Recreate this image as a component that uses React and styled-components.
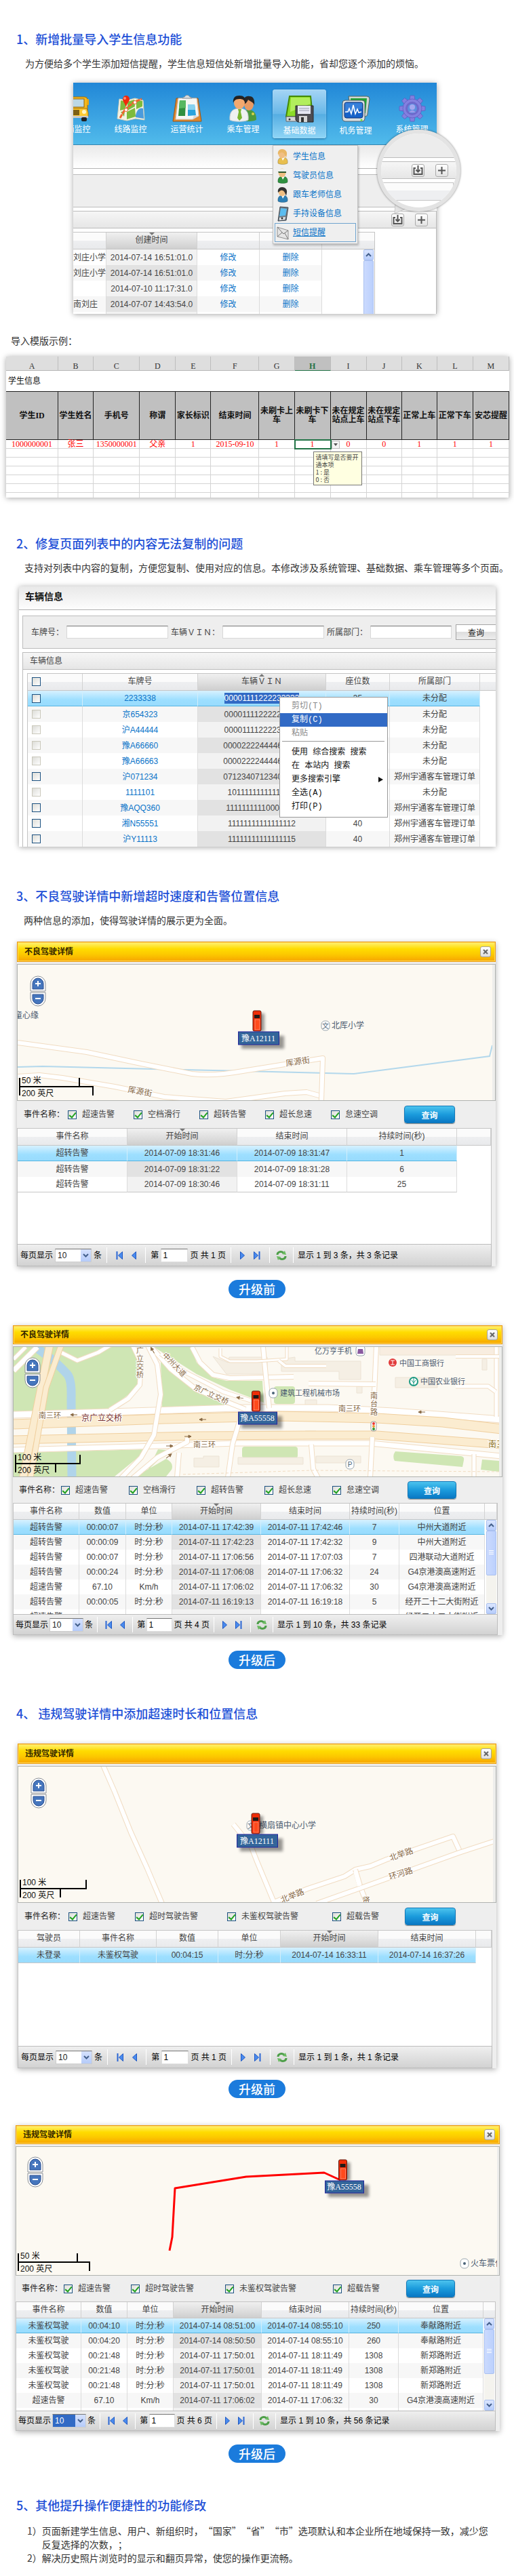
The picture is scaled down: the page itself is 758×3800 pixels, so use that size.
import React from "react";
import styled, { createGlobalStyle, css } from "styled-components";

const cjk = `"Noto Sans CJK SC", sans-serif`;
const ui = `"Liberation Sans", "Noto Sans CJK SC", sans-serif`;
const sheetFont = `"Liberation Serif", "Noto Sans CJK SC", serif`;

const Global = createGlobalStyle`
  * { box-sizing: border-box; }
  body { margin: 0; background: #fff; color: #333; font: 14px/20px ${cjk}; text-spacing-trim: space-all; }
  button, input, select { font-family: inherit; margin: 0; }
`;

/* ---------- page text ---------- */
const Page = styled.main`
  width: 100%;
  padding: 45px 0 16px;
  overflow: hidden;
`;
const Heading = styled.h2`
  margin: ${(p) => p.$top}px 24px 0;
  font-size: 18px;
  line-height: 24px;
  font-weight: 500;
  color: #1d4fd7;
`;
const Para = styled.p`
  margin: ${(p) => p.$top}px 0 0 ${(p) => p.$left}px;
`;
const Notes = styled.ol`
  margin: 16px 36px 0 40px;
  padding: 0;
  list-style: none;
`;
const Note = styled.li`
  display: flex;
`;
const NoteMark = styled.span`
  flex: 0 0 21px;
`;
const Pill = styled.div`
  width: 84px;
  height: 27px;
  margin: ${(p) => p.$top}px auto 0;
  border-radius: 14px;
  background: #1b7bdc;
  color: #fff;
  font-size: 18px;
  line-height: 26px;
  font-weight: 500;
  text-align: center;
`;

/* ---------- shared frames ---------- */
const Figure = styled.figure`
  position: relative;
  margin: ${(p) => p.$m};
  font: 12px/16px ${ui};
  color: #444;
`;
const Frame = styled.div`
  position: relative;
  overflow: hidden;
  height: ${(p) => p.$h}px;
  background: #fff;
  box-shadow: 0 1px 8px rgba(0, 0, 0, 0.35);
`;
const TitleStrip = styled.div`
  height: 35px;
  padding: 6px 9px;
  border-bottom: 1px solid #aeaeae;
  background: linear-gradient(#e8e8e8, #fdfdfd);
  font-size: 14px;
  line-height: 18px;
  font-weight: 700;
  color: #111;
`;
const GrayPanel = styled.div`
  height: 49px;
  margin: 8px 0 5px ${(p) => p.$left || 0}px;
  border: solid #bcbcbc;
  border-width: 1px 0 1px ${(p) => (p.$left ? 1 : 0)}px;
  background: #eee;
`;
const Toolbar = styled.div`
  display: flex;
  align-items: center;
  justify-content: ${(p) => (p.$end ? "flex-end" : "flex-start")};
  gap: 16px;
  height: 26px;
  padding: 0 12px 0 10px;
  border: solid #bcbcbc;
  border-width: 1px 0;
  background: linear-gradient(#f6f6f6, #e6e6e6);
`;
const ToolButton = styled.button`
  display: flex;
  align-items: center;
  justify-content: center;
  width: 19px;
  height: 19px;
  padding: 0;
  border: 1px solid #aaa;
  border-radius: 3px;
  background: linear-gradient(#fff, #e2e2e2);
`;

/* ---------- data table ---------- */
const GridBox = styled.div`
  position: relative;
  overflow: hidden;
  height: ${(p) => p.$h}px;
  margin-right: ${(p) => p.$right || 0}px;
  border: solid #c4c4c4;
  border-width: 1px ${(p) => (p.$open ? 0 : 1)}px 0 ${(p) => (p.$flush ? 0 : 1)}px;
  background: #fff;
`;
const Table = styled.table`
  width: 100%;
  table-layout: fixed;
  border-collapse: separate;
  border-spacing: 0;
  text-align: center;
  white-space: nowrap;
`;
const Col = styled.col`
  width: ${(p) => p.$w}px;
`;
const Th = styled.th`
  position: relative;
  height: ${(p) => p.$h || 25}px;
  padding: 0 0 2px;
  overflow: hidden;
  border-right: 1px solid #d2d2d2;
  border-bottom: 1px solid #c6c6c6;
  background: linear-gradient(#fbfbfb 50%, #eeeff1 51%, #e9eaec);
  font-weight: 400;
  line-height: 16px;
  ${(p) =>
    p.$sorted &&
    css`
      background: linear-gradient(#f0f0f0, #e0e0e0 50%, #cfcfcf);
      &::before {
        content: "";
        position: absolute;
        top: 0;
        left: calc(50% - 4px);
        border: 4px solid transparent;
        border-top-color: ${p.$up ? "transparent" : "#777"};
        border-bottom-color: ${p.$up ? "#777" : "transparent"};
        margin-top: ${p.$up ? -4 : 0}px;
      }
    `}
`;
const Td = styled.td`
  height: ${(p) => p.$h}px;
  padding: 0;
  overflow: hidden;
  line-height: 16px;
  border-right: 1px solid #dcdcdc;
  background: ${(p) => (p.$sorted ? (p.$even ? "#e2e2e2" : "#f2f2f2") : p.$even ? "#f7f7f7" : "#fff")};
  ${(p) =>
    p.$selected &&
    css`
      border-right-color: #d3eefb;
      border-bottom: 1px solid #55b5e2;
      background: linear-gradient(#d7f1ff, #9ddfff 60%, #98dbfd);
    `}
  ${(p) =>
    p.$last &&
    css`
      border-bottom: 1px solid #c6c6c6;
    `}
`;
const CellLink = styled.a`
  color: #0a74c9;
  text-decoration: none;
`;
const Selection = styled.span`
  display: inline-block;
  background: #316ac5;
  color: #fff;
`;
const Blank = styled.td`
  padding: 0;
`;

/* ---------- scroll bar ---------- */
const ScrollTrack = styled.div`
  position: absolute;
  top: ${(p) => p.$top}px;
  right: 1px;
  bottom: 0;
  display: flex;
  flex-direction: column;
  width: 15px;
  background: #f4f3ee;
`;
const ScrollKnob = styled.span`
  display: flex;
  align-items: center;
  justify-content: center;
  flex: 0 0 16px;
  border: 1px solid #a9c0f0;
  border-radius: 2px;
  background: linear-gradient(#dbe6ff, #b6ccfb);
`;
const ScrollThumb = styled(ScrollKnob)`
  flex: 0 0 ${(p) => p.$h}px;
  margin-bottom: auto;
  background: linear-gradient(90deg, #cbdafe, #bbd0fd);
`;
function Chevron({ up }) {
  return (
    <svg width="9" height="6" viewBox="0 0 9 6">
      <path d={up ? "M1 5l3.500-3.500L8 5" : "M1 1l3.500 3.500L8 1"} fill="none" stroke="#44608c" strokeWidth="2" />
    </svg>
  );
}
function ScrollBar({ top, thumb, ends }) {
  return (
    <ScrollTrack $top={top}>
      <ScrollKnob><Chevron up /></ScrollKnob>
      <ScrollThumb $h={thumb}>
        {ends && <svg width="7" height="8" viewBox="0 0 7 8"><path d="M0 .5h7M0 3h7M0 5.500h7" stroke="#fff" /></svg>}
      </ScrollThumb>
      {ends && <ScrollKnob><Chevron /></ScrollKnob>}
    </ScrollTrack>
  );
}

function DataGrid({ cols, heads, rows, sorted, selected, rowH = 23, headH = 25, up, closed }) {
  return (
    <Table>
      <colgroup>{cols.map((w, i) => <Col key={i} $w={w} />)}</colgroup>
      <thead>
        <tr>{heads.map((h, i) => <Th key={i} $h={headH} $sorted={i === sorted} $up={up}>{h}</Th>)}</tr>
      </thead>
      <tbody>
        {rows.map((r, n) => (
          <tr key={n}>
            {r.map((c, i) => (
              <Td key={i} $h={rowH} $even={n % 2 === 1} $sorted={i === sorted} $selected={selected && n === 0} $last={closed && n === rows.length - 1}>{c}</Td>
            ))}
            <Blank />
          </tr>
        ))}
      </tbody>
    </Table>
  );
}

/* ---------- section 1: navigation shot ---------- */
const NavBar = styled.nav`
  display: flex;
  height: 92px;
  padding-top: 10px;
  border-bottom: 1px solid #3585b0;
  background: linear-gradient(#2187d7, #51bbeb);
`;
const NavList = styled.div`
  display: flex;
  gap: 4px;
  margin-left: -38px;
`;
const NavItem = styled.button`
  display: flex;
  flex-direction: column;
  align-items: center;
  gap: 2px;
  width: 79px;
  height: 72px;
  padding: 8px 0 0;
  border: 0;
  border-radius: 4px;
  background: ${(p) => (p.$on ? "linear-gradient(#a5d5f5, #68b7e8 50%, #55ade2 51%, #8fd5f6)" : "none")};
  box-shadow: ${(p) => (p.$on ? "0 1px 3px rgba(0,60,110,.6), inset 0 0 1px #fff" : "none")};
  color: #fff;
  font-size: 12px;
  line-height: 18px;
  white-space: nowrap;
`;
const FadeStrip = styled.div`
  height: 35px;
  border-bottom: 1px solid #b4b4b4;
  background: linear-gradient(#e9e9e9, #fff);
`;
const ListArea = styled.div`
  border-right: 1px solid #bcbcbc;
`;
const RecordsPad = styled.div`
  padding: 5px 90px 0 0;
`;
const Clip = styled.div`
  overflow: hidden;
  text-align: left;
`;
const DropMenu = styled.ul`
  position: absolute;
  top: 92px;
  left: 294px;
  width: 126px;
  margin: 0;
  padding: 2px;
  list-style: none;
  border: 1px solid #c2c2c2;
  background: #efefef;
  box-shadow: 1px 2px 3px rgba(0, 0, 0, 0.25);
`;
const DropItem = styled.li`
  display: flex;
  align-items: center;
  gap: 6px;
  height: 28px;
  padding-left: 2px;
  border: 1px solid ${(p) => (p.$on ? "#6fa4cf" : "transparent")};
`;
const DropLink = styled.a`
  color: #0a74c9;
  text-decoration: ${(p) => (p.$on ? "underline" : "none")};
`;
const Lens = styled.div`
  position: absolute;
  top: 69px;
  right: -35px;
  width: 123px;
  height: 121px;
  border: 6px solid #e3e3e3;
  border-radius: 50%;
  overflow: hidden;
  background: #fff;
  box-shadow: 0 0 3px rgba(0, 0, 0, 0.5);
`;
const LensTop = styled.div`
  height: 36px;
  margin-bottom: 5px;
  border-bottom: 1px solid #bcbcbc;
  background: #ececec;
`;
const LensBar = styled(Toolbar)`
  padding: 0 0 0 45px;
`;
const LensBox = styled.div`
  height: 27px;
  margin: 5px 4px 0 0;
  border: 1px solid #c4c4c4;
  background: linear-gradient(#fbfbfb 45%, #eeeff1 46%);
`;
const LensTail = styled.svg`
  position: absolute;
  top: 177px;
  right: 42px;
`;

const ImportIcon = () => (
  <svg width="15" height="15" viewBox="0 0 15 15" fill="none" stroke="#555" strokeWidth="2">
    <path d="M4 4H1.500v9h12V4H11M7.500 0v9M4.500 6.500l3 3 3-3" />
  </svg>
);
const PlusIcon = () => (
  <svg width="11" height="11" viewBox="0 0 11 11"><path d="M5.500 0v11M0 5.500h11" stroke="#555" strokeWidth="2" /></svg>
);

const BusIcon = () => (
  <svg width="42" height="40" viewBox="0 0 42 40">
    <rect x="1" y="3" width="39" height="27" rx="4" fill="#f5b81c" stroke="#9b6c0c" />
    <rect x="5" y="6" width="30" height="12" fill="#bcd8e6" stroke="#8b6414" />
    <path d="M3 20h36l2 6v6H2z" fill="#ffcb33" stroke="#a87710" />
    <rect x="10" y="22" width="18" height="8" fill="#7d6014" /><circle cx="35" cy="25" r="3" fill="#fff7c8" />
    <rect x="1" y="31" width="40" height="3" fill="#c9c9c9" /><rect x="31" y="33" width="8" height="6" rx="2" fill="#222" />
    <rect x="39" y="6" width="3" height="9" rx="1" fill="#e8a813" />
  </svg>
);
const MapIcon = () => (
  <svg width="42" height="40" viewBox="0 0 42 40">
    <path d="M4 6l11 2 12-3 12 3 2 29-13-2-13 3-14-3z" fill="#f4f2e4" stroke="#d0d0b8" />
    <path d="M6 8l8 2-1 11-8 2zM16 10l10-3 1 10-11 6zM29 7l9 2v8l-9 4zM15 25l12-6 1 13-13 4zM6 25l6-1-1 8z" fill="#7dbb3c" />
    <path d="M28 30c2-8 6-12 11-10l1 15-12-2z" fill="#4b9bdc" />
    <path d="M5 34L12 22 25 11l12-5" fill="none" stroke="#f0642c" strokeWidth="3" strokeDasharray="6 1" />
    <circle cx="14" cy="22" r="2.500" fill="#fff" stroke="#e8602c" /><circle cx="27" cy="11" r="2.500" fill="#fff" stroke="#e8602c" />
    <path d="M14 18C12 12 9 10 9 6a5 5 0 0 1 10 0c0 4-4 6-5 12z" fill="#f0290c" /><circle cx="12" cy="5" r="2" fill="#ff8c72" />
  </svg>
);
const ClipboardIcon = () => (
  <svg width="44" height="40" viewBox="0 0 44 40">
    <path d="M6 5h32l5 34H1z" fill="#de8a33" stroke="#9c5514" />
    <path d="M9 5h27l3 26-9 5H5z" fill="#f7f7f4" stroke="#cfcfcf" /><path d="M39 31l-9 5 2-6z" fill="#d9d9d9" />
    <path d="M11 8h9l-1 23H9z" fill="#2f8f3f" /><path d="M11 8h9v11l-10 1z" fill="#58b862" />
    <path d="M23 14h10l2 16-12 1z" fill="#2aa3dd" /><path d="M23 14h10l1 8H23z" fill="#86d1ef" />
    <path d="M15 5c0-2 3-1 4-3 1-2 5-2 6 0 1 2 4 1 4 3z" fill="#d7dde2" stroke="#8a9299" />
  </svg>
);
const PeopleIcon = () => (
  <svg width="42" height="40" viewBox="0 0 42 40">
    <path d="M19 38c0-12 4-16 10-16s11 4 11 14c0 2-6 3-12 3z" fill="#4d9a3d" />
    <ellipse cx="29" cy="14" rx="7" ry="9" fill="#e89a63" /><path d="M20 14c0-9 4-13 10-12 6 0 8 6 7 13-2-5-6-5-9-8-2 4-4 7-8 7z" fill="#272727" />
    <path d="M1 37c-1-12 4-17 14-17s14 5 13 17c-6 3-21 3-27 0z" fill="#eef1f2" stroke="#c3c9cc" />
    <path d="M13 21h5l-1 4 2 9-4 4-3-4 2-9z" fill="#78b62f" />
    <ellipse cx="15" cy="12" rx="8" ry="9" fill="#f3a96f" /><path d="M6 12C5 4 9 1 15 1s10 3 9 11c-2-4-3-6-9-6s-8 3-9 6z" fill="#222" />
    <circle cx="35" cy="28" r="2" fill="#d9d24a" />
  </svg>
);
const DriveIcon = () => (
  <svg width="42" height="42" viewBox="0 0 42 42">
    <path d="M6 2h31l3 30H1z" fill="#8bdc27" stroke="#438708" strokeWidth="2" /><path d="M8 4h28l1 9L7 25z" fill="#b2ee5d" />
    <path d="M1 32h39v7H1z" fill="#d4d7d9" stroke="#666" /><circle cx="6" cy="36" r="1.500" fill="#333" />
    <path d="M15 16h26v24H18l-3-3z" fill="#4d4d52" stroke="#28282b" /><rect x="18" y="16" width="19" height="12" fill="#e5e7f2" />
    <path d="M20 20h15M20 23h15" stroke="#9a9db0" /><rect x="20" y="31" width="12" height="9" fill="#d5d5d5" /><rect x="23" y="33" width="4" height="7" fill="#333" />
  </svg>
);
const MonitorIcon = () => (
  <svg width="42" height="42" viewBox="0 0 42 42">
    <path d="M10 2h27q4 0 4 4l-3 22q0 4-5 4H14z" fill="#cfd6d3" stroke="#54655a" /><path d="M13 5h24l-2 22H14z" fill="#22a336" />
    <rect x="1" y="8" width="33" height="31" rx="4" fill="#d9dfe1" stroke="#53606a" /><rect x="4" y="11" width="27" height="23" rx="3" fill="#1762c8" stroke="#0c3278" />
    <path d="M5 12h25v8L5 27z" fill="#4b92e6" opacity=".6" />
    <path d="M5 25h4l2-5 3 8 3-13 3 13 3-7 2 5 4-1" fill="none" stroke="#fff" strokeWidth="1.500" /><circle cx="29" cy="37" r="1.500" fill="#6de332" />
  </svg>
);
const GearIcon = () => (
  <svg width="44" height="40" viewBox="-22 -20 44 40">
    <g fill="#8380e0" stroke="#5b58bd" strokeWidth=".7">
      {[0, 45, 90, 135, 180, 225, 270, 315].map((a) => <path key={a} d="M-4-11L-3-19H3L4-11z" transform={`rotate(${a})`} />)}
      <circle r="14" />
    </g>
    <circle r="8.500" fill="#5d8fe0" stroke="#6d69cc" strokeWidth="3" /><circle cy="-2" r="4" fill="#a5a8f0" />
    <path d="M-5 6q5-7 10 0z" fill="#9a9bea" />
  </svg>
);
const NAV = [
  ["车辆监控", BusIcon], ["线路监控", MapIcon], ["运营统计", ClipboardIcon], ["乘车管理", PeopleIcon],
  ["基础数据", DriveIcon], ["机务管理", MonitorIcon], ["系统管理", GearIcon],
];

const Person = ({ hair, body, skin = "#f0bf83", hat }) => (
  <svg width="18" height="23" viewBox="0 0 18 23">
    <path d="M2 21c-1-6 2-9 7-9s8 3 7 9c-4 2-10 2-14 0z" fill={body} stroke="#0003" />
    <path d="M7 12l2 5 3-5z" fill="#fff" /><ellipse cx="8" cy="7" rx="5.500" ry="6.500" fill={skin} />
    <path d={hat ? "M2 5q0-4 6-4t6 4l-1 2H3z" : "M2 8C1 3 4 0 8 0s8 3 7 8l-1 5C12 8 11 4 6 5z"} fill={hair} />
    {hat && <path d="M2 5h12v2H3z" fill="#2f5a2f" />}
  </svg>
);
const Pda = () => (
  <svg width="18" height="23" viewBox="0 0 18 23">
    <path d="M5 1l12 1-3 19-12 1z" fill="#737b84" stroke="#3f4850" /><path d="M6 3l9 1-2 10-9 1z" fill="#5bbdf0" />
    <path d="M4 17l9-1-1 4-8 1z" fill="#e1e4e6" /><circle cx="8" cy="18" r="1.500" fill="#333" />
  </svg>
);
const Mail = () => (
  <svg width="18" height="23" viewBox="0 0 18 23">
    <path d="M1 3l16 5v13L1 17z" fill="#e5e5e5" stroke="#8f8f8f" /><path d="M1 3l9 10 7-5M1 17l7-6M17 21l-5-9" fill="none" stroke="#777" />
  </svg>
);
const MENU = [
  ["学生信息", <Person hair="#e9b766" body="#e8bf4e" />], ["驾驶员信息", <Person hat hair="#eef1ee" body="#2f9140" />],
  ["跟车老师信息", <Person hair="#333" body="#2d7fb5" />], ["手持设备信息", <Pda />], ["短信提醒", <Mail />],
];

const link = (t) => <CellLink href="#">{t}</CellLink>;
const RECORDS = [
  ["刘庄小学", "2014-07-14 16:51:01.0"], ["刘庄小学", "2014-07-14 16:51:01.0"],
  ["", "2014-07-10 11:17:31.0"], ["南刘庄", "2014-07-07 14:43:54.0"],
];

function NavigationFigure() {
  return (
    <Figure $m="19px 114px 0 108px">
      <Frame $h={341}>
        <NavBar>
          <NavList>
            {NAV.map(([t, Icon], i) => <NavItem key={t} $on={i === 4}><Icon />{t}</NavItem>)}
          </NavList>
        </NavBar>
        <FadeStrip />
        <GrayPanel />
        <ListArea>
          <Toolbar $end>
            <ToolButton aria-label="导入"><ImportIcon /></ToolButton>
            <ToolButton aria-label="新增"><PlusIcon /></ToolButton>
          </Toolbar>
          <RecordsPad>
            <GridBox $h={121} $flush>
              <DataGrid
                cols={[49, 134, 92, 92, 79]}
                heads={["", "创建时间", "", "", ""]}
                sorted={1}
                rows={[...RECORDS.map(([a, b]) => [<Clip>{a}</Clip>, b, link("修改"), link("删除")]), ["", "", "", ""]]}
              />
              <ScrollBar top={25} thumb={90} />
            </GridBox>
          </RecordsPad>
        </ListArea>
        <DropMenu>
          {MENU.map(([t, icon], i) => <DropItem key={t} $on={i === 4}>{icon}<DropLink href="#" $on={i === 4}>{t}</DropLink></DropItem>)}
        </DropMenu>
      </Frame>
      <LensTail width="22" height="18" viewBox="0 0 22 18"><path d="M3 0L2 16 20 8z" fill="#e3e3e3" stroke="#c8c8c8" /></LensTail>
      <Lens>
        <LensTop />
        <LensBar>
          <ToolButton aria-label="导入"><ImportIcon /></ToolButton>
          <ToolButton aria-label="新增"><PlusIcon /></ToolButton>
        </LensBar>
        <LensBox />
      </Lens>
    </Figure>
  );
}

/* ---------- spreadsheet ---------- */
const Sheet = styled(Table)`
  font-family: ${sheetFont};
  font-size: 12px;
`;
const ColLetter = styled.th`
  height: 21px;
  padding: 7px 0 0;
  border-bottom: 1px solid ${(p) => (p.$on ? "#217346" : "#b5b5b5")};
  border-right: 1px solid #bdbdbd;
  background: ${(p) => (p.$on ? "#c0c0c0" : "#dedede")};
  color: ${(p) => (p.$on ? "#217346" : "#333")};
  font-weight: ${(p) => (p.$on ? 700 : 400)};
  line-height: 12px;
`;
const SheetTitle = styled.td`
  height: 31px;
  padding: 0 3px;
  border-bottom: 1px solid #222;
  text-align: left;
  color: #111;
`;
const FieldHead = styled.th`
  height: 71px;
  padding: 0;
  border: solid #222;
  border-width: 0 1px 1px 0;
  background: #c0c0c0;
  color: #111;
  font-weight: 700;
  line-height: 13px;
  white-space: pre-line;
`;
const SheetCell = styled.td`
  position: relative;
  height: 13px;
  padding: 0;
  border: solid #d4d4d4;
  border-width: 0 1px 1px 0;
  color: #f00;
  line-height: 12px;
  ${(p) =>
    p.$on &&
    css`
      z-index: 1;
      border-color: #217346;
      box-shadow: inset 1px 1px 0 #217346, 0 0 0 1px #217346;
    `}
`;
const CellDrop = styled.button`
  position: absolute;
  top: 1px;
  left: calc(100% + 2px);
  display: flex;
  align-items: center;
  justify-content: center;
  width: 12px;
  height: 12px;
  padding: 0;
  border: 1px solid #bbb;
  background: #f5f5f5;
`;
const CellTip = styled.div`
  position: absolute;
  z-index: 1;
  top: 17px;
  left: 27px;
  width: 72px;
  height: 50px;
  padding: 2px 3px;
  border: 1px solid #777;
  background: #ffffe1;
  color: #444;
  font: 9px/11px ${cjk};
  text-align: left;
  white-space: pre;
`;
const SHEET = [
  [77, "学生ID", "1000000001"], [52, "学生姓名", "张三"], [68, "手机号", "1350000001"], [53, "称谓", "父亲"],
  [52, "家长标识", "1"], [71, "结束时间", "2015-09-10"], [52, "未刷卡上\n车", "1"], [53, "未刷卡下\n车", "1"],
  [53, "未在规定\n站点上车", "0"], [52, "未在规定\n站点下车", "0"], [52, "正常上车", "1"], [53, "正常下车", "1"], [53, "安芯提醒", "1"],
];
function SheetFigure() {
  return (
    <Figure $m="14px 7px 0 9px">
      <Frame $h={208}>
        <Sheet>
          <colgroup>{SHEET.map(([w], i) => <Col key={i} $w={w} />)}</colgroup>
          <thead>
            <tr>{SHEET.map((_, i) => <ColLetter key={i} $on={i === 7}>{"ABCDEFGHIJKLM"[i]}</ColLetter>)}</tr>
          </thead>
          <tbody>
            <tr><SheetTitle colSpan={13}>学生信息</SheetTitle></tr>
            <tr>{SHEET.map(([, h], i) => <FieldHead key={i}>{h}</FieldHead>)}</tr>
            <tr>
              {SHEET.map(([, , v], i) => (
                <SheetCell key={i} $on={i === 7}>
                  {v}
                  {i === 7 && (
                    <>
                      <CellDrop aria-label="选择"><svg width="6" height="4" viewBox="0 0 6 4"><path d="M0 0h6L3 4z" fill="#555" /></svg></CellDrop>
                      <CellTip>{"请填写是否要开\n通本项\n1 : 是\n0 : 否"}</CellTip>
                    </>
                  )}
                </SheetCell>
              ))}
            </tr>
            {[0, 1, 2, 3, 4, 5].map((n) => <tr key={n}>{SHEET.map((_, i) => <SheetCell key={i} />)}</tr>)}
          </tbody>
        </Sheet>
      </Frame>
    </Figure>
  );
}

/* ---------- section 2: vehicle list ---------- */
const SearchRow = styled(GrayPanel)`
  display: flex;
  align-items: center;
  padding-left: 12px;
`;
const SearchLabel = styled.label`
  flex: 0 0 ${(p) => p.$w}px;
  white-space: nowrap;
`;
const SearchInput = styled.input`
  flex: 0 1 ${(p) => p.$w}px;
  min-width: 0;
  height: 19px;
  margin-right: ${(p) => p.$gap || 4}px;
  border: 1px solid #d8d8d8;
  border-top: 1px solid #777;
  background: #fff;
`;
const GrayButton = styled.button`
  flex: 1 0 56px;
  height: 23px;
  padding: 0;
  border: 1px solid #a5a5a5;
  border-right: 0;
  background: linear-gradient(#fff 45%, #dedede 50%, #ededed);
  color: #222;
  font-size: 12px;
`;
const ListBox = styled.div`
  margin-left: 5px;
  border-left: 1px solid #bcbcbc;
`;
const ListPad = styled.div`
  padding: 5px 0 0 6px;
`;
const Tick = styled.input.attrs({ type: "checkbox" })`
  appearance: none;
  position: relative;
  flex: none;
  display: block;
  width: 13px;
  height: 13px;
  border: 1px solid ${(p) => (p.disabled ? "#cac8bb" : "#1c5180")};
  background: linear-gradient(135deg, #dcdcd7, #fff);
  &:checked::after {
    content: "";
    position: absolute;
    left: 3px;
    top: 0;
    width: 4px;
    height: 8px;
    border: solid #21a121;
    border-width: 0 2px 2px 0;
    transform: rotate(40deg);
  }
`;
const TickCell = styled.div`
  padding-left: 6px;
`;
const ContextMenu = styled.ul`
  position: absolute;
  top: 163px;
  left: 384px;
  width: 160px;
  height: 178px;
  margin: 0;
  padding: 3px 0;
  list-style: none;
  border: 1px solid #999;
  background: #fff;
  font-family: "Liberation Mono", ${cjk};
`;
const ContextItem = styled.li`
  display: flex;
  align-items: center;
  justify-content: space-between;
  height: 20px;
  padding: 0 6px 0 17px;
  background: ${(p) => (p.$on ? "#316ac5" : "none")};
  color: ${(p) => (p.$on ? "#fff" : p.$off ? "#8a8a8a" : "#111")};
  white-space: pre;
`;
const ContextRule = styled.li`
  height: 1px;
  margin: 1px 4px 6px 3px;
  background: #999;
`;
const dept = "郑州宇通客车管理订单";
const CARS = [
  ["2233338", "00001111222233333", "35", "未分配", 1], ["京654323", "00001111222223333", "35", "未分配", 0],
  ["沪A44444", "00001111222233334", "35", "未分配", 0], ["豫A66660", "00002222444466660", "35", "未分配", 0],
  ["豫A66663", "00002222444466663", "35", "未分配", 0], ["沪071234", "07123407123407123", "35", dept, 1],
  ["1111101", "10111111111111111", "35", "未分配", 0], ["豫AQQ360", "11111111110003600", "40", dept, 1],
  ["湘N55551", "11111111111111112", "40", dept, 1], ["沪Y11113", "11111111111111115", "40", dept, 1],
];
function VehicleFigure() {
  return (
    <Figure $m="18px 27px 0 28px">
      <Frame $h={384}>
        <TitleStrip>车辆信息</TitleStrip>
        <SearchRow $left={5}>
          <SearchLabel $w={52} htmlFor="plate">车牌号：</SearchLabel><SearchInput $w={150} id="plate" />
          <SearchLabel $w={76} htmlFor="vin">车辆ＶＩＮ：</SearchLabel><SearchInput $w={150} id="vin" />
          <SearchLabel $w={64} htmlFor="dept">所属部门：</SearchLabel><SearchInput $w={120} $gap={6} id="dept" />
          <GrayButton>查询</GrayButton>
        </SearchRow>
        <ListBox>
          <Toolbar>车辆信息</Toolbar>
          <ListPad>
            <GridBox $h={256} $open>
              <DataGrid
                cols={[81, 170, 189, 94, 133, 24]}
                heads={[<TickCell><Tick aria-label="全选" /></TickCell>, "车牌号", "车辆ＶＩＮ", "座位数", "所属部门", ""]}
                sorted={2}
                up
                selected
                rows={CARS.map(([a, b, c, d, on], i) => [
                  <TickCell><Tick aria-label={a} disabled={!on} /></TickCell>, link(a), i ? b : <Selection>{b}</Selection>, c, d,
                ])}
              />
            </GridBox>
          </ListPad>
        </ListBox>
        <ContextMenu>
          <ContextItem $off>剪切(T)</ContextItem>
          <ContextItem $on>复制(C)</ContextItem>
          <ContextItem $off>粘贴</ContextItem>
          <ContextRule />
          <ContextItem>使用 综合搜索 搜索</ContextItem>
          <ContextItem>在 本站内 搜索</ContextItem>
          <ContextItem>更多搜索引擎<svg width="7" height="8" viewBox="0 0 7 8"><path d="M0 0l7 4-7 4z" fill="#111" /></svg></ContextItem>
          <ContextItem>全选(A)</ContextItem>
          <ContextItem>打印(P)</ContextItem>
        </ContextMenu>
      </Frame>
    </Figure>
  );
}

/* ---------- sections 3 and 4: detail windows ---------- */
const Window = styled(Figure)`
  background: #eee;
  box-shadow: 0 2px 8px rgba(0, 0, 0, 0.3);
`;
const WindowTitle = styled.div`
  display: flex;
  align-items: center;
  justify-content: space-between;
  height: ${(p) => p.$h}px;
  margin-bottom: 3px;
  padding: 0 6px 0 10px;
  border: 1px solid #eb9c10;
  background: linear-gradient(#fff176, #ffdc00 35%, #fcc800 65%, #f7a400);
  box-shadow: inset 0 0 0 1px #ffd95a;
  color: #332500;
  font-weight: 700;
`;
const CloseButton = styled.button`
  display: flex;
  align-items: center;
  justify-content: center;
  width: 16px;
  height: 16px;
  padding: 0;
  border: 1px solid #a8a49a;
  border-radius: 3px;
  background: linear-gradient(#fff, #ddd);
`;
const MapBox = styled.div`
  border: 1px solid #b0b3b0;
  background: #fcf9f2;
`;
const MapSvg = styled.svg`
  display: block;
  width: 100%;
  height: ${(p) => p.$h}px;
  font: 12px ${ui};
`;
const FilterBar = styled.div`
  display: flex;
  align-items: center;
  height: ${(p) => p.$h}px;
  padding-left: ${(p) => p.$left}px;
  white-space: nowrap;
`;
const FilterName = styled.span`
  flex: 0 0 ${(p) => p.$w}px;
  color: #222;
`;
const FilterItem = styled.label`
  display: flex;
  align-items: center;
  gap: 8px;
  flex: 0 0 ${(p) => p.$w}px;
`;
const BlueButton = styled.button`
  width: ${(p) => p.$w}px;
  height: 26px;
  margin-left: 11px;
  padding: 0;
  border: 1px solid #1278b8;
  border-radius: 4px;
  background: linear-gradient(#4cc3ee, #1b9bdc 50%, #0a78c4);
  box-shadow: 0 1px 1px #888;
  color: #fff;
  font-size: 12px;
  font-weight: 700;
`;
const PagerBar = styled.div`
  display: flex;
  align-items: center;
  height: ${(p) => p.$h}px;
  margin-right: ${(p) => p.$right}px;
  border: 1px solid #bdbdbd;
  background: linear-gradient(#efefef, #d2d2d2);
  color: #000;
  white-space: pre;
`;
const PagerGroup = styled.div`
  display: flex;
  align-items: center;
  gap: ${(p) => p.$gap || 3}px;
  height: 23px;
  padding: 0 ${(p) => p.$pad}px;
  border-right: ${(p) => (p.$end ? 0 : 1)}px solid #fff;
`;
const PageSize = styled.span`
  position: relative;
  display: block;
  width: ${(p) => p.$w}px;
  height: 20px;
`;
const SizeSelect = styled.select`
  appearance: none;
  width: 100%;
  height: 20px;
  padding: 0 3px;
  border: 1px solid #ccc;
  border-top-color: #777;
  border-radius: 0;
  background: ${(p) => (p.$on ? "#316ac5" : "#fff")};
  color: ${(p) => (p.$on ? "#fff" : "#222")};
  font-size: 12px;
`;
const SizeArrow = styled.span`
  position: absolute;
  top: 1px;
  right: 1px;
  display: flex;
  align-items: center;
  justify-content: center;
  width: 15px;
  height: 18px;
  background: linear-gradient(#d5e1fd, #b5cbf9);
  pointer-events: none;
`;
const PageInput = styled.input`
  width: ${(p) => p.$w}px;
  height: 20px;
  padding: 0 2px;
  border: 1px solid #ddd;
  border-top-color: #777;
  font-size: 12px;
`;
const IconButton = styled.button`
  display: block;
  padding: 0;
  border: 0;
  background: none;
  line-height: 0;
`;
const Arrow = ({ flip, bar, label }) => (
  <IconButton aria-label={label}>
    <svg width={bar ? 10 : 7} height="12" viewBox={bar ? "0 0 10 12" : "0 0 7 12"}>
      <g transform={flip ? `translate(${bar ? 10 : 7} 0) scale(-1 1)` : undefined}>
        <path d="M.5.500L6.500 6 .5 11.500z" fill="#4a8bee" stroke="#1e58c4" />
        {bar && <path d="M8.500 0v12" stroke="#2b66d4" strokeWidth="2" />}
      </g>
    </svg>
  </IconButton>
);
const Refresh = () => (
  <IconButton aria-label="刷新">
    <svg width="16" height="16" viewBox="0 0 16 16" fill="none" stroke="#4d9e48" strokeWidth="3">
      <path d="M2 7c0-4 5-6 9-3M14 9c0 4-5 6-9 3" /><path d="M9 6l6 1-2-6zM7 10l-6-1 2 6z" fill="#6abb60" stroke="none" />
    </svg>
  </IconButton>
);
function Pager({ h, right, pages, total, to, small, active }) {
  const s = small ? 1 : 0;
  return (
    <PagerBar $h={h} $right={right}>
      <PagerGroup $pad={small ? 3 : 4} $gap={small ? 2 : 3}>
        每页显示
        <PageSize $w={small ? 50 : 54}>
          <SizeSelect aria-label="每页显示" $on={active}><option>10</option></SizeSelect>
          <SizeArrow><Chevron /></SizeArrow>
        </PageSize>
        {"条 "}
      </PagerGroup>
      <PagerGroup $pad={13 - s * 2} $gap={13 - s}><Arrow flip bar label="首页" /><Arrow flip label="上一页" /></PagerGroup>
      <PagerGroup $pad={7 - s} $gap={3 - s}>第<PageInput $w={small ? 38 : 40} aria-label="页码" defaultValue="1" />{`页 共 ${pages} 页`}</PagerGroup>
      <PagerGroup $pad={13 - s} $gap={13 - s}><Arrow label="下一页" /><Arrow bar label="末页" /></PagerGroup>
      <PagerGroup $pad={9 - s}><Refresh /></PagerGroup>
      <PagerGroup $pad={6} $end>{`显示 1 到 ${to} 条，共 ${total} 条记录`}</PagerGroup>
    </PagerBar>
  );
}

/* map parts */
const Road = ({ d, w = 6, fill = "#fff", edge = "#f1dcc2" }) => (
  <g fill="none" strokeLinejoin="round"><path d={d} stroke={edge} strokeWidth={w + 2} /><path d={d} stroke={fill} strokeWidth={w} /></g>
);
const Street = ({ x, y, r = 0, children, color = "#8a6a45", size = 12 }) => (
  <text x={x} y={y} transform={`rotate(${r} ${x} ${y})`} fill={color} fontSize={size} stroke="#fff" strokeWidth="2" paintOrder="stroke">{children}</text>
);
const Place = ({ x, y, children, size = 12 }) => <text x={x} y={y} fill="#4b5b70" fontSize={size}>{children}</text>;
const Poi = ({ x, y, children, color = "#4b6478" }) => (
  <g><rect x={x - 6} y={y - 7} width="12" height="14" rx="5" fill="#fff" stroke="#9aa6ae" />
    {children ? <text x={x} y={y + 4} textAnchor="middle" fontSize="10" fill={color}>{children}</text> : <circle cx={x} cy={y} r="2" fill={color} />}</g>
);
const ZoomControl = ({ x, y = 16 }) => (
  <g transform={`translate(${x - 12} ${y})`}>
    <path d="M1 23V12a11 11 0 0 1 22 0v11zM1 25h22v9a11 11 0 0 1-22 0z" fill="#fff" stroke="#8a8f96" />
    <path d="M4 20v-8a8 8 0 0 1 16 0v8zM4 28h16v6a8 8 0 0 1-16 0z" fill="#4676bd" stroke="#2a4f90" />
    <path d="M12 8v8M8 12h8M8 34h8" stroke="#fff" strokeWidth="2" />
  </g>
);
const ScaleRule = ({ x, y, up, down, a, b }) => (
  <g>
    <path d={`M${x} ${y - 13}v26M${x - 1} ${y}H${Math.max(up, down) + 1}M${up} ${y - 13}v13M${down} ${y}v13`} stroke="#000" strokeWidth="2" fill="none" />
    <text x={x + 3} y={y - 5} fill="#111">{a}</text><text x={x + 3} y={y + 14} fill="#111">{b}</text>
  </g>
);
const Bus = ({ x, y, w, label, h = 19 }) => (
  <g>
    <path d={`M${x + 5} ${y + 6}h${w + 3}v${h}h-${w + 3}zM${x + w / 2} ${y - 27}h9v27h-9z`} fill="#000" opacity=".4" filter="url(#busShade)" />
    <rect x={x + w / 2 - 8} y={y - 31} width="12" height="30" rx="2" fill="#ef2d07" stroke="#661d12" />
    <rect x={x + w / 2 - 6} y={y - 25} width="8" height="5" fill="#221a18" /><rect x={x + w / 2 - 5} y={y - 18} width="7" height="15" fill="#ff4a1c" stroke="#f8b29c" strokeWidth=".6" />
    <rect x={x + 0.5} y={y} width={w} height={h} fill="#33659a" stroke="#25259b" />
    <text x={x + w / 2} y={y + h / 2 + 4} textAnchor="middle" fill="#fff" fontFamily={`"Liberation Serif", "Noto Sans CJK SC", serif`}>{label}</text>
  </g>
);
const Strip = ({ x }) => <rect x={x} width="12" height="220" fill="#eeeeec" />;
const Shade = () => <defs><filter id="busShade"><feGaussianBlur stdDeviation="2" /></filter></defs>;

const SuburbMap = () => (
  <MapSvg $h={200} viewBox="0 0 704 200" preserveAspectRatio="xMinYMid slice">
    <Shade />
    <path d="M0 151L37 150 245 155 375 158 496 161 696 135 700 119" fill="none" stroke="#b3d8ec" strokeWidth="2" />
    <Road d="M0 165L32 163 66 167 143 180 216 195 307 202 394 190 426 188 448 194" />
    <Road d="M448 201L450 138 332 157Q288 165 257 161L182 146 102 129 0 115" />
    <Place x={-5} y={79}>童心缘</Place>
    <Poi x={454} y={90}>文</Poi><Place x={463} y={94}>北厍小学</Place>
    <Street x={396} y={150} r={-9}>厍源街</Street><Street x={162} y={188} r={10}>厍源街</Street>
    <ZoomControl x={30} /><ScaleRule x={3} y={180} up={91} down={111} a="50 米" b="200 英尺" />
    <Bus x={325} y={99} w={60} label="豫A12111" /><Strip x={700} />
  </MapSvg>
);
const VillageMap = () => (
  <MapSvg $h={200} viewBox="0 0 704 200" preserveAspectRatio="xMinYMid slice">
    <Road d="M125-2L142 37 166 97 190 150 212 202" />
    <Road d="M317 85L343 117 352 140 377 200 427 180 481 162 497 152 519 147 543 137 577 125 641 103 651 125" />
    <Road d="M497 152L505 179 514 202" /><Road d="M440 202L505 179 650 127 702 110" />
    <path d="M497 155L503 176" stroke="#fff" strokeWidth="6" />
    <Poi x={343} y={87}>文</Poi><Place x={355} y={91}>横扇镇中心小学</Place>
    <Street x={549} y={139} r={-19}>北举路</Street><Street x={548} y={167} r={-17}>环河路</Street>
    <Street x={389} y={201} r={-22}>北举路</Street><Street x={507} y={202}>贤</Street>
    <ZoomControl x={30} /><ScaleRule x={3} y={180} up={100} down={62} a="100 米" b="200 英尺" />
    <Bus x={322} y={100} w={60} label="豫A12111" /><Strip x={700} />
  </MapSvg>
);
const TrackMap = () => (
  <MapSvg $h={189} viewBox="0 0 712 189" preserveAspectRatio="xMinYMid slice">
    <path d="M226 153L230 133 234 61 339 44 454 38 478 49" fill="none" stroke="#f00" strokeWidth="3" strokeLinejoin="round" />
    <Poi x={661} y={172} /><Place x={670} y={176}>火车票代</Place>
    <ZoomControl x={28} y={14} /><ScaleRule x={3} y={170} up={90} down={108} a="50 米" b="200 英尺" />
    <Bus x={455} y={50} w={57} h={18} label="豫A55558" /><Strip x={709} />
  </MapSvg>
);
const Pointer = ({ x, y, r = 0 }) => (
  <path d="M5 0H-5M-5 0l4-2v4z" transform={`translate(${x} ${y}) rotate(${r})`} fill="#8a6a45" stroke="#8a6a45" />
);
const CityMap = () => (
  <MapSvg $h={191} viewBox="0 0 720 191" preserveAspectRatio="xMinYMid slice">
    <g fill="#cfe6b4">
      <path d="M0 0H178L190 40 186 58 140 92 0 97zM217 22L251 46 280 66 338 92 219 92zM207 0H261L270 23 294 45 314 50 367 50 369 82 319 63 270 40zM0 156L198 151 149 191H0zM213 151l15 1-30 30zM180 191l45-26q12 6 8 16l-8 10z" />
      <rect x="384" y="58" width="31" height="26" rx="4" /><rect x="337" y="147" width="82" height="17" rx="4" />
      <path d="M563 154l97 7q5 1 4 6l-2 10-100-9q-4-7 1-14zM691 166l25 2v16l-27-3z" />
    </g>
    <g fill="#f5efe4" stroke="#ece3d5">
      <path d="M294 14l22 9 2-8h56v25h-60zM395 18l20-3v6h97v27h-32V36h-85z" /><path d="M540-2h173v14H540z" fill="#f8ede0" />
      <path d="M563 45h62v15h-62zM266 164l14 0v-3h23v16h-37zM331 163h96v10h-96zM446 161h66v10h-66zM430 124h16M430 78h17v10h-17zM506 58h8v10h-8zM691 18h7v16h-7z" />
    </g>
    <path d="M29-2Q52 14 62 23T79 40 85 76L86 193" fill="none" stroke="#b0d4ea" strokeWidth="13" />
    <Road d="M0 35L35 0" w={7} /><Road d="M0 18L18 0" w={5} />
    <Road d="M0 100L174 95 328 90 464 90 560 95 720 107" w={9} />
    <Road d="M0 152L212 146 328 142 526 142 720 161" w={7} />
    <Road d="M0 114L222 106 391 102 536 105 633 111 720 121" w={13} fill="#fbecd0" edge="#f0cf9e" />
    <Road d="M0 137L270 131 439 130 536 130 720 144" w={11} fill="#fbecd0" edge="#f0cf9e" />
    <Road d="M263 0L275 23 294 41 319 46 413 44" /><Road d="M368 0L372 43 377 90" />
    <Road d="M305 2v12l14 7h40l44-3V0" w={3} /><Road d="M391 20l10 8h60" w={4} />
    <Road d="M535-2L531 92" /><Road d="M529 133L526 193" /><Road d="M435 54L534 55" />
    <Road d="M333 110L323 143 316 193" /><Road d="M244 156L241 193" /><Road d="M439 144L442 180 449 193" />
    <Road d="M712 0V103" w={5} /><Road d="M652 58H700L711 66" w={5} /><Road d="M652 14H716" w={4} /><Road d="M679 158V193" w={5} />
    <Road d="M70 8L94 20 125 8 145-4" w={5} /><Road d="M176-2L188 23 186 56 169 76 142 93" />
    <Road d="M203 0L232 33 270 63 342 92" /><Road d="M217 10L251 36 309 66 365 84" w={5} />
    <Road d="M198-2L212 26 217 70 207 130 188 163 157 195" /><Road d="M174 195L212 163 256 140V134" />
    <Road d="M53-2L14 193" w={10} fill="#fbecd0" edge="#f0cf9e" /><Road d="M70-2L48 60 25 193" w={7} fill="#fbecd0" edge="#f0cf9e" />
    <path d="M250 188L440 182 716 184" fill="none" stroke="#f1dcc2" strokeDasharray="4 3" />
    <Place x={444} y={10} size={11}>亿万亨手机</Place><rect x="505" y="-2" width="13" height="15" rx="4" fill="#fff" stroke="#9aa6ae" /><path d="M508 3h7l1 7h-9z" fill="#8a5aa0" />
    <circle cx="559" cy="23" r="6" fill="#e23b3b" /><path d="M556 20h6M559 20v6M556 26h6" stroke="#fff" /><Place x={569} y={28} size={11}>中国工商银行</Place>
    <circle cx="590" cy="51" r="6" fill="#fff" stroke="#1e9a83" strokeWidth="2" /><path d="M590 45v12M587 49l3 4 3-4" stroke="#1e9a83" fill="none" /><Place x={600} y={55} size={11}>中国农业银行</Place>
    <Poi x={383} y={68} /><Place x={393} y={72} size={11}>建筑工程机械市场</Place>
    <Street x={37} y={105} size={11}>南三环</Street><Street x={479} y={95} size={11}>南三环</Street><Street x={265} y={148} size={11}>南三环</Street>
    <Street x={100} y={109} color="#7a2f2a">京广立交桥</Street><Street x={700} y={148} color="#8a6a10">南三</Street>
    {["南", "台", "路"].map((c, i) => <Street key={c} x={526} y={76 + i * 12} size={11}>{c}</Street>)}
    {["广", "立", "交", "桥"].map((c, i) => <Street key={c} x={181} y={9 + i * 12} size={11}>{c}</Street>)}
    <Street x={219} y={13} r={46} size={11}>中州大道</Street><Street x={265} y={62} r={25} size={11}>京广立交桥</Street>
    <Pointer x={89} y={100} /><Pointer x={279} y={107} /><Pointer x={257} y={132} r={180} /><Pointer x={230} y={146} r={180} />
    <Pointer x={602} y={96} /><Pointer x={334} y={75} r={10} /><Pointer x={229} y={161} r={140} /><Pointer x={205} y={5} r={60} />
    <Poi x={496} y={173}>P</Poi>
    <rect x="527" y="110" width="8" height="14" rx="3" fill="#fff" stroke="#999" /><circle cx="531" cy="113" r="2" fill="#e33" /><circle cx="531" cy="117" r="2" fill="#e93" /><circle cx="531" cy="121" r="2" fill="#393" />
    <ZoomControl x={28} y={15} /><ScaleRule x={3} y={172} up={98} down={62} a="100 米" b="200 英尺" />
    <Bus x={331} y={96} w={57} h={18} label="豫A55558" /><Strip x={716} />
  </MapSvg>
);

function DetailWindow({ m, title, titleH, map, filterH, filterPad, nameW, filters, buttonW, gridH, right, grid, scroll, pager }) {
  return (
    <Window $m={m}>
      <WindowTitle $h={titleH}>
        {title}
        <CloseButton aria-label="关闭"><svg width="8" height="8" viewBox="0 0 8 8"><path d="M1 1l6 6M7 1L1 7" stroke="#666" strokeWidth="2" /></svg></CloseButton>
      </WindowTitle>
      <MapBox>{map}</MapBox>
      <FilterBar $h={filterH} $left={filterPad}>
        <FilterName $w={nameW}>事件名称：</FilterName>
        {filters.map(([t, w]) => <FilterItem key={t} $w={w}><Tick defaultChecked />{t}</FilterItem>)}
        <BlueButton $w={buttonW}>查询</BlueButton>
      </FilterBar>
      <GridBox $h={gridH} $right={right}>
        <DataGrid {...grid} selected />
        {scroll && <ScrollBar top={24} thumb={66} ends />}
      </GridBox>
      <Pager right={right} {...pager} />
    </Window>
  );
}

const alarmFilters = (w) => ["超速告警", "空档滑行", "超转告警", "超长怠速", "怠速空调"].map((t) => [t, w]);
const hms = "时:分:秒";
const longHeads = ["事件名称", "数值", "单位", "开始时间", "结束时间", "持续时间(秒)", "位置", ""];
const row = (name, value, unit, day, from, until, secs, place) => [name, value, unit, `${day} ${from}`, `${day} ${until}`, secs, place];

const badAfter = [
  row("超转告警", "00:00:07", hms, "2014-07-11", "17:42:39", "17:42:46", "7", "中州大道附近"),
  row("超转告警", "00:00:09", hms, "2014-07-11", "17:42:23", "17:42:32", "9", "中州大道附近"),
  row("超转告警", "00:00:07", hms, "2014-07-11", "17:06:56", "17:07:03", "7", "四港联动大道附近"),
  row("超转告警", "00:00:24", hms, "2014-07-11", "17:06:08", "17:06:32", "24", "G4京港澳高速附近"),
  row("超速告警", "67.10", "Km/h", "2014-07-11", "17:06:02", "17:06:32", "30", "G4京港澳高速附近"),
  row("超转告警", "00:00:05", hms, "2014-07-11", "16:19:13", "16:19:18", "5", "经开二十二大街附近"),
  ["超速告警", "", "", "", "", "", "经开二十二大街附近"],
];
const ruleAfter = [
  row("未鉴权驾驶", "00:04:10", hms, "2014-07-14", "08:51:00", "08:55:10", "250", "奉献路附近"),
  row("未鉴权驾驶", "00:04:20", hms, "2014-07-14", "08:50:50", "08:55:10", "260", "奉献路附近"),
  row("未鉴权驾驶", "00:21:48", hms, "2014-07-11", "17:50:01", "18:11:49", "1308", "新郑路附近"),
  row("未鉴权驾驶", "00:21:48", hms, "2014-07-11", "17:50:01", "18:11:49", "1308", "新郑路附近"),
  row("未鉴权驾驶", "00:21:48", hms, "2014-07-11", "17:50:01", "18:11:49", "1308", "新郑路附近"),
  row("超速告警", "67.10", "Km/h", "2014-07-11", "17:06:02", "17:06:32", "30", "G4京港澳高速附近"),
  ["未鉴权驾驶", "", hms, "", "", "", "经开二十二大街附近"],
];

export default function App() {
  return (
    <>
      <Global />
      <Page lang="zh-CN">
        <Heading $top={0}>1、新增批量导入学生信息功能</Heading>
        <Para $top={14} $left={37}>为方便给多个学生添加短信提醒，学生信息短信处新增批量导入功能，省却您逐个添加的烦恼。</Para>
        <NavigationFigure />
        <Para $top={29} $left={16}>导入模版示例：</Para>
        <SheetFigure />

        <Heading $top={55}>2、修复页面列表中的内容无法复制的问题</Heading>
        <Para $top={14} $left={36}>支持对列表中内容的复制，方便您复制、使用对应的信息。本修改涉及系统管理、基础数据、乘车管理等多个页面。</Para>
        <VehicleFigure />

        <Heading $top={60}>3、不良驾驶详情中新增超时速度和告警位置信息</Heading>
        <Para $top={14} $left={35}>两种信息的添加，使得驾驶详情的展示更为全面。</Para>
        <DetailWindow
          m="22px 27px 0 25px" title="不良驾驶详情" titleH={30} map={<SuburbMap />}
          filterH={40} filterPad={10} nameW={65} filters={alarmFilters(97)} buttonW={75}
          gridH={171} right={6}
          grid={{
            cols: [162, 162, 162, 162, 50], heads: ["事件名称", "开始时间", "结束时间", "持续时间(秒)", ""], sorted: 1, closed: true,
            rows: [
              ["超转告警", "2014-07-09 18:31:46", "2014-07-09 18:31:47", "1"],
              ["超转告警", "2014-07-09 18:31:22", "2014-07-09 18:31:28", "6"],
              ["超转告警", "2014-07-09 18:30:46", "2014-07-09 18:31:11", "25"],
            ],
          }}
          pager={{ h: 33, pages: 1, to: 3, total: 3 }}
        />
        <Pill $top={20}>升级前</Pill>
        <DetailWindow
          m="40px 17px 0 19px" title="不良驾驶详情" titleH={28} map={<CityMap />}
          filterH={38} filterPad={9} nameW={62} filters={alarmFilters(100)} buttonW={72}
          gridH={164} right={7} scroll
          grid={{ cols: [97, 69, 68, 131, 131, 73, 126, 18], heads: longHeads, sorted: 3, rowH: 22, headH: 24, rows: badAfter }}
          pager={{ h: 31, pages: 4, to: 10, total: 33, small: true }}
        />
        <Pill $top={23}>升级后</Pill>

        <Heading $top={53}>4、 违规驾驶详情中添加超速时长和位置信息</Heading>
        <DetailWindow
          m="33px 26px 0 26px" title="违规驾驶详情" titleH={30} map={<VillageMap />}
          filterH={40} filterPad={10} nameW={65} buttonW={75}
          filters={[["超速告警", 98], ["超时驾驶告警", 136], ["未鉴权驾驶告警", 155], ["超载告警", 96]]}
          gridH={171} right={6}
          grid={{
            cols: [91, 113, 91, 92, 144, 144, 23], heads: ["驾驶员", "事件名称", "数值", "单位", "开始时间", "结束时间", ""], sorted: 4, closed: true,
            rows: [["未登录", "未鉴权驾驶", "00:04:15", hms, "2014-07-14 16:33:11", "2014-07-14 16:37:26"]],
          }}
          pager={{ h: 33, pages: 1, to: 1, total: 1 }}
        />
        <Pill $top={17}>升级前</Pill>
        <DetailWindow
          m="40px 21px 0 23px" title="违规驾驶详情" titleH={28} map={<TrackMap />}
          filterH={38} filterPad={9} nameW={62} buttonW={72}
          filters={[["超速告警", 99], ["超时驾驶告警", 139], ["未鉴权驾驶告警", 159], ["超载告警", 97]]}
          gridH={161} right={6} scroll
          grid={{ cols: [96, 68, 68, 130, 129, 73, 125, 18], heads: longHeads, sorted: 3, rowH: 22, headH: 24, rows: ruleAfter }}
          pager={{ h: 30, pages: 6, to: 10, total: 56, small: true, active: true }}
        />
        <Pill $top={20}>升级后</Pill>

        <Heading $top={50}>5、其他提升操作便捷性的功能修改</Heading>
        <Notes>
          <Note><NoteMark>1）</NoteMark><span>页面新建学生信息、用户、新组织时，“国家”“省”“市”选项默认和本企业所在地域保持一致，减少您反复选择的次数，；</span></Note>
          <Note><NoteMark>2）</NoteMark><span>解决历史照片浏览时的显示和翻页异常，使您的操作更流畅。</span></Note>
        </Notes>
      </Page>
    </>
  );
}
